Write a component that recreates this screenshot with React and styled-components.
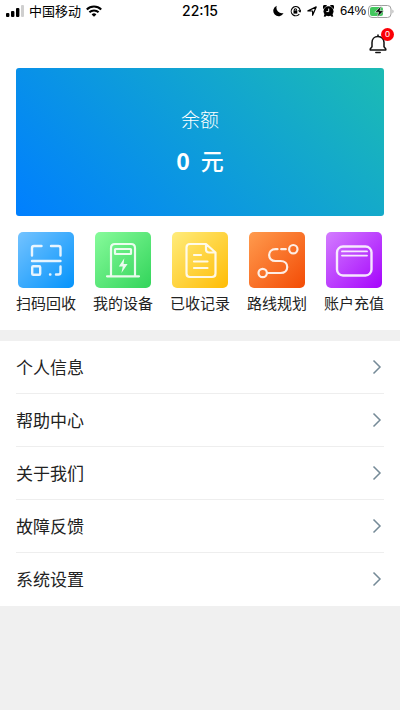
/* eslint-disable react/prop-types */
import styled, { createGlobalStyle } from "styled-components";

const services = [
  { id: "scan", name: "扫码回收", from: "#74c3ff", to: "#0493fb", icon: <ScanIcon /> },
  { id: "device", name: "我的设备", from: "#87fb9b", to: "#32d45a", icon: <DeviceIcon /> },
  { id: "record", name: "已收记录", from: "#ffec7c", to: "#ffbc04", icon: <RecordIcon /> },
  { id: "route", name: "路线规划", from: "#ff9b4e", to: "#f34b05", icon: <RouteIcon /> },
  { id: "recharge", name: "账户充值", from: "#d37dff", to: "#a504fc", icon: <WalletIcon /> },
];

const menu = ["个人信息", "帮助中心", "关于我们", "故障反馈", "系统设置"];

function App() {
  return (
    <>
      <GlobalStyle />
      <StatusBar />
      <main>
        <Top>
          <Header>
            <BellButton type="button" aria-label="消息">
              <BellIcon />
              <Badge>0</Badge>
            </BellButton>
          </Header>
          <BalanceCard>
            <BalanceLabel>余额</BalanceLabel>
            <BalanceAmount>
              <strong>0</strong>
              <span>元</span>
            </BalanceAmount>
          </BalanceCard>
          <Services>
            {services.map((service) => (
              <Service key={service.id} type="button">
                <Tile $from={service.from} $to={service.to}>
                  {service.icon}
                </Tile>
                {service.name}
              </Service>
            ))}
          </Services>
        </Top>
        <Menu>
          {menu.map((name) => (
            <MenuItem key={name}>
              <MenuLink href="#">
                {name}
                <Chevron />
              </MenuLink>
            </MenuItem>
          ))}
        </Menu>
      </main>
    </>
  );
}

function StatusBar() {
  return (
    <Status>
      <StatusGroup>
        <svg width="18" height="12" viewBox="0 0 18 12">
          <rect x="0" y="8" width="3.4" height="4" rx="1" />
          <rect x="5" y="6" width="3.4" height="6" rx="1" />
          <rect x="10" y="3" width="3.4" height="9" rx="1" />
          <rect x="15" y="0" width="3" height="12" rx="1" fill="#cfcfcf" />
        </svg>
        <Carrier>中国移动</Carrier>
        <svg width="16" height="12" viewBox="0 0 16 12" fill="none" stroke="#000" strokeWidth="2.1">
          <path d="M.8 4.500a10.300 10.300 0 0 1 14.400 0" />
          <path d="M3.400 7.300a6.600 6.600 0 0 1 9.200 0" />
          <path d="M8 11.800 5.600 9.400a3.400 3.400 0 0 1 4.800 0z" fill="#000" stroke="none" />
        </svg>
      </StatusGroup>
      <Clock>22:15</Clock>
      <StatusGroup $end>
        <svg width="11" height="12" viewBox="0 0 11 12">
          <path d="M3.8.8a5.400 5.400 0 1 0 6.800 7.300A5.600 5.600 0 0 1 3.800.8z" />
        </svg>
        <svg width="11" height="12" viewBox="0 0 11 12" fill="none" stroke="#000" strokeWidth="1.1">
          <path d="M8.600 2.500A4.600 4.600 0 1 0 9.300 9.200M8.600 2.500a4.600 4.600 0 0 1 1.400 4" />
          <path d="m8.500 5.300 1.500 1.500 1-1.800" />
          <rect x="3.500" y="5.400" width="3.800" height="3.200" fill="#000" stroke="none" />
          <path d="M4.300 5.600v-.8a1.100 1.100 0 0 1 2.200 0v.8" />
        </svg>
        <svg width="10" height="12" viewBox="0 0 10 12" fill="none" stroke="#000" strokeWidth="1.2">
          <path d="M.9 5.900 9.200 1.900 5.600 10.300V6z" strokeLinejoin="round" />
        </svg>
        <svg width="11" height="12" viewBox="0 0 11 12">
          <circle cx="5.5" cy="6.3" r="5" />
          <path d="M.2 4A2.400 2.400 0 0 1 4 .6zM10.800 4A2.400 2.400 0 0 0 7 .6zM1.500 9 .7 11.500l1.600.3 1.500-1.400zM9.500 9l.8 2.500-1.600.3-1.500-1.400z" />
          <path d="M5.700 3.600v3H3.400" fill="none" stroke="#fff" strokeWidth="1" />
        </svg>
        <Power>
          64%
          <svg width="26" height="13" viewBox="0 0 26 13">
            <rect x=".5" y=".5" width="22.5" height="12" rx="3.500" fill="#fff" stroke="#a0a0a0" />
            <rect x="2" y="2" width="13" height="9" rx="2" fill="#43c75e" />
            <path d="M24.500 4.600c1.300.6 1.300 3.200 0 3.800z" fill="#a0a0a0" />
            <path d="M13.400 1 6.800 7.200h3.900l-1.500 5 6.600-6.500h-4z" stroke="#fff" strokeWidth=".6" />
          </svg>
        </Power>
      </StatusGroup>
    </Status>
  );
}

function BellIcon() {
  return (
    <svg width="18" height="20" viewBox="0 0 18 20" fill="none" stroke="#111" strokeWidth="1.5" strokeLinecap="round" strokeLinejoin="round">
      <path d="M9 1v1.200" />
      <path d="M9 2.400c-3.800 0-6 2.800-6 6.200v4.200L1.200 15v1h15.600v-1L15 12.800V8.600c0-3.400-2.200-6.200-6-6.200z" />
      <path d="M6.800 18.400h4.400" />
    </svg>
  );
}

function ScanIcon() {
  return (
    <IconSvg strokeWidth="2.4">
      <path d="M14 23.500V16q0-2 2-2h7.500M33 14h7.500q2 0 2 2v7.500" />
      <path d="M14 29h28.500" />
      <rect x="14.200" y="34.200" width="8" height="8.500" rx="1" />
      <path d="M32 42.500h.4M42.500 34.500v6q0 2-2 2H38" />
    </IconSvg>
  );
}

function DeviceIcon() {
  return (
    <IconSvg strokeWidth="2.2">
      <path d="M12 44.300h32M16 44V16q0-4 4-4h16q4 0 4 4v28" />
      <rect x="20" y="17" width="16" height="5" rx=".5" />
      <path d="M29.300 26.200 23.800 34.500h4l-1.400 6.500 6.200-9h-4z" fill="#fff" stroke="none" />
    </IconSvg>
  );
}

function RecordIcon() {
  return (
    <IconSvg strokeWidth="2.2">
      <path d="M34 12H18q-3.500 0-3.500 3.500v26q0 3.500 3.500 3.500h22q3.500 0 3.500-3.500V20.500zv5.500q0 3 3 3h6" />
      <path d="M22 23h7M22 29.500h13.500M22 36h13.500" />
    </IconSvg>
  );
}

function RouteIcon() {
  return (
    <IconSvg strokeWidth="2.2">
      <circle cx="13.700" cy="41" r="4.200" />
      <circle cx="44.300" cy="17.200" r="4.200" />
      <path d="M18 41h13.500c9 0 9-12 0-12h-5c-8.500 0-8.500-11.800 0-11.800h2M32.200 17.200h4.600" />
    </IconSvg>
  );
}

function WalletIcon() {
  return (
    <IconSvg strokeWidth="2.4">
      <rect x="11" y="14.500" width="34.500" height="29" rx="6" />
      <path d="M16 19.400h25M16 23.600h25" strokeWidth="1.9" />
    </IconSvg>
  );
}

function Chevron() {
  return (
    <svg width="10" height="16" viewBox="0 0 10 16" fill="none" stroke="#758a97" strokeWidth="1.5">
      <path d="M1.500 1.500 8 8l-6.500 6.500" />
    </svg>
  );
}

const GlobalStyle = createGlobalStyle`
  * {
    box-sizing: border-box;
  }
  body {
    margin: 0;
    background-color: #f0f0f0;
    color: #222;
    font-family: "Noto Sans CJK SC", sans-serif;
  }
  button {
    padding: 0;
    border: none;
    background: none;
    color: inherit;
    font-family: inherit;
    cursor: pointer;
  }
  svg {
    display: block;
    flex-shrink: 0;
  }
`;

const Status = styled.header`
  height: 22px;
  padding: 0 6px;
  display: grid;
  grid-template-columns: 1fr auto 1fr;
  align-items: center;
  background-color: #fff;
  color: #000;
`;

const StatusGroup = styled.div`
  display: flex;
  align-items: center;
  justify-content: ${(props) => (props.$end ? "flex-end" : "flex-start")};
  gap: ${(props) => (props.$end ? "6px" : "5px")};
`;

const Carrier = styled.span`
  font-size: 13px;
  line-height: 20px;
`;

const Clock = styled.time`
  font-family: Inter, sans-serif;
  font-size: 14px;
  font-weight: 500;
  line-height: 20px;
`;

const Power = styled.span`
  display: flex;
  align-items: center;
  gap: 2px;
  font-family: "Liberation Sans", sans-serif;
  font-size: 13px;
  line-height: 20px;
`;

const Top = styled.section`
  padding: 0 16px 16px;
  background-color: #fff;
`;

const Header = styled.div`
  height: 46px;
  padding-top: 12px;
  display: flex;
  align-items: flex-start;
  justify-content: flex-end;
`;

const BellButton = styled.button`
  position: relative;
  margin-right: -3px;
`;

const Badge = styled.span`
  position: absolute;
  top: -6px;
  right: -7px;
  width: 13px;
  height: 13px;
  border-radius: 50%;
  background-color: #fb0007;
  color: #fff;
  font-family: "Liberation Sans", sans-serif;
  font-size: 9px;
  line-height: 13px;
  text-align: center;
`;

const BalanceCard = styled.div`
  height: 148px;
  padding-bottom: 3px;
  display: flex;
  flex-direction: column;
  align-items: center;
  justify-content: center;
  gap: 11px;
  border-radius: 3px;
  background: linear-gradient(45deg, #007fff, #1cbbb4);
  color: #fff;
`;

const BalanceLabel = styled.div`
  font-size: 19px;
  font-weight: 300;
  line-height: 28px;
`;

const BalanceAmount = styled.div`
  display: flex;
  gap: 11px;
  font-size: 23px;
  font-weight: 500;
  line-height: 32px;

  strong {
    font-weight: 700;
  }
`;

const Services = styled.nav`
  margin-top: 16px;
  display: flex;
  justify-content: space-between;
`;

const Service = styled.button`
  display: flex;
  flex-direction: column;
  align-items: center;
  gap: 4px;
  font-size: 15px;
  line-height: 22px;
`;

const Tile = styled.span`
  width: 56px;
  height: 56px;
  border-radius: 5px;
  background: linear-gradient(135deg, ${(props) => props.$from}, ${(props) => props.$to});
`;

const IconSvg = styled.svg.attrs({ viewBox: "0 0 56 56", "aria-hidden": true })`
  width: 56px;
  height: 56px;
  fill: none;
  stroke: #fff;
  stroke-linecap: round;
  stroke-linejoin: round;
  opacity: 0.88;
`;

const Menu = styled.ul`
  margin: 11px 0 0;
  padding: 0 16px;
  list-style: none;
  background-color: #fff;
`;

const MenuItem = styled.li`
  border-bottom: 1px solid #eee;

  &:last-child {
    border-bottom-color: transparent;
  }
`;

const MenuLink = styled.a`
  padding: 14px 2px 14px 0;
  display: flex;
  align-items: center;
  justify-content: space-between;
  color: inherit;
  font-size: 17px;
  line-height: 24px;
  text-decoration: none;
`;

export default App;
